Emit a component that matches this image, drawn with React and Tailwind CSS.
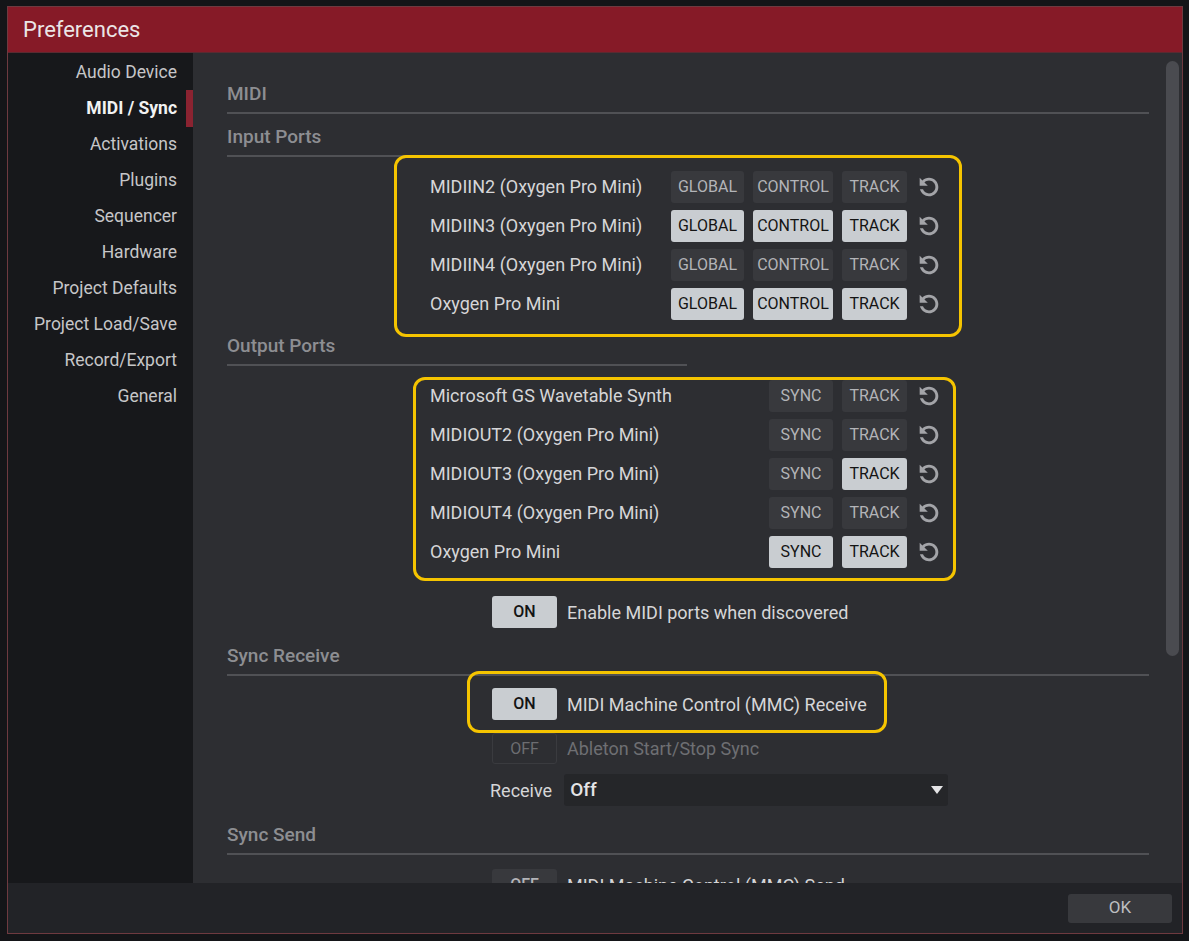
import React from "react";

const navItems = [
  "Audio Device",
  "MIDI / Sync",
  "Activations",
  "Plugins",
  "Sequencer",
  "Hardware",
  "Project Defaults",
  "Project Load/Save",
  "Record/Export",
  "General",
];

const inputPorts = [
  { name: "MIDIIN2 (Oxygen Pro Mini)", on: [false, false, false] },
  { name: "MIDIIN3 (Oxygen Pro Mini)", on: [true, true, true] },
  { name: "MIDIIN4 (Oxygen Pro Mini)", on: [false, false, false] },
  { name: "Oxygen Pro Mini", on: [true, true, true] },
];

const outputPorts = [
  { name: "Microsoft GS Wavetable Synth", on: [false, false] },
  { name: "MIDIOUT2 (Oxygen Pro Mini)", on: [false, false] },
  { name: "MIDIOUT3 (Oxygen Pro Mini)", on: [false, true] },
  { name: "MIDIOUT4 (Oxygen Pro Mini)", on: [false, false] },
  { name: "Oxygen Pro Mini", on: [true, true] },
];

// counter-clockwise reset arrow
function ResetIcon() {
  return (
    <svg width="28" height="28" viewBox="0 0 24 24" className="mr-[-4px]">
      <g transform="translate(24 0) scale(-1 1)">
        <path
          d="M17.65 6.35C16.2 4.9 14.21 4 12 4c-4.42 0-7.99 3.58-7.99 8s3.57 8 7.99 8c3.73 0 6.84-2.55 7.73-6h-2.6c-.82 2.1-2.8 3.5-5.13 3.5-3.04 0-5.5-2.46-5.5-5.5s2.46-5.5 5.5-5.5c1.52 0 2.9.62 3.9 1.62L13 11h7V4l-2.35 2.35z"
          fill="#a3a4a8"
        />
      </g>
    </svg>
  );
}

function PortButton({ label, active, width }) {
  return (
    <div
      className={
        "h-[32px] flex items-center justify-center rounded-[3px] text-[16px] " +
        width +
        (active ? " bg-[#c9cdd1] text-[#141414]" : " bg-[#38393d] text-[#b3b4b8]")
      }
    >
      {label}
    </div>
  );
}

function PortRow({ name, children }) {
  return (
    <div className="flex items-center h-[32px]">
      <div className="flex-1 text-[18px] leading-[22px] text-[#d6d6d8]">{name}</div>
      <div className="flex gap-[9px]">{children}</div>
      <div className="w-[32px] flex justify-end">
        <ResetIcon />
      </div>
    </div>
  );
}

function Heading({ children, className = "", lineWidth = "w-full" }) {
  return (
    <div className={className}>
      <div className={"pb-[8px] border-b-2 border-[#505155] " + lineWidth}>
        <div className="text-[19px] leading-[20px] font-medium text-[#8d8e92]">{children}</div>
      </div>
    </div>
  );
}

function Toggle({ on, disabled }) {
  if (disabled) {
    return (
      <div className="w-[65px] h-[31px] flex items-center justify-center rounded-[3px] border border-[#3a3b3f] text-[16px] text-[#6c6d71]">
        OFF
      </div>
    );
  }
  return (
    <div
      className={
        "w-[65px] h-[32px] flex items-center justify-center rounded-[3px] text-[16px] font-medium " +
        (on ? "bg-[#c9cdd1] text-[#141414]" : "bg-[#38393d] text-[#b3b4b8]")
      }
    >
      {on ? "ON" : "OFF"}
    </div>
  );
}

export default function App() {
  return (
    <div
      className="w-[1189px] h-[941px] bg-[#141518] pt-[6px] pl-[7px]"
      style={{ fontFamily: "Roboto, 'Liberation Sans', sans-serif" }}
    >
      <div className="w-[1176px] h-[928px] border border-[#6e3a40] flex flex-col overflow-hidden">
        <div className="h-[45px] bg-[#861a27] flex items-center pl-[15px] text-[22px] text-[#ebe5e6]">
          Preferences
        </div>
        <div className="flex flex-1 min-h-0 border-t border-[#5a2a31]">
          <div className="w-[185px] bg-[#17181b] pt-[1px]">
            {navItems.map((item) => {
              const active = item === "MIDI / Sync";
              return (
                <div key={item} className="relative h-[36px] flex items-center justify-end pr-[16px]">
                  <span
                    className={
                      "text-[17.5px] " +
                      (active ? "font-bold text-[#f2f2f2]" : "text-[#c6c6c8]")
                    }
                  >
                    {item}
                  </span>
                  {active && (
                    <div className="absolute right-0 top-0 w-[7px] h-[37px] bg-[#8b2331]" />
                  )}
                </div>
              );
            })}
          </div>

          <div className="flex-1 relative overflow-hidden bg-[#2d2e32]">
            <div className="absolute right-[3px] top-[8px] w-[13px] h-[595px] rounded-full bg-[#4a4b50]" />
            <div className="pl-[34px] pr-[33px] pt-[31px]">
              <Heading>MIDI</Heading>
              <Heading className="mt-[13px]" lineWidth="w-[460px]">
                Input Ports
              </Heading>

              <div className="ml-[167px] mt-[-2px] w-[568px] border-[3px] border-[#f5c400] rounded-[12px] pl-[33px] pr-[20px] pt-[13px] pb-[14px] flex flex-col gap-[7px]">
                {inputPorts.map((p) => (
                  <PortRow key={p.name} name={p.name}>
                    <PortButton label="GLOBAL" active={p.on[0]} width="w-[73px]" />
                    <PortButton label="CONTROL" active={p.on[1]} width="w-[80px]" />
                    <PortButton label="TRACK" active={p.on[2]} width="w-[65px]" />
                  </PortRow>
                ))}
              </div>

              <Heading className="mt-[-1px]" lineWidth="w-[460px]">
                Output Ports
              </Heading>

              <div className="ml-[186px] mt-[11px] w-[543px] border-[3px] border-[#f5c400] rounded-[12px] pl-[14px] pr-[14px] pt-0 pb-[10px] flex flex-col gap-[7px]">
                {outputPorts.map((p) => (
                  <PortRow key={p.name} name={p.name}>
                    <PortButton label="SYNC" active={p.on[0]} width="w-[64px]" />
                    <PortButton label="TRACK" active={p.on[1]} width="w-[65px]" />
                  </PortRow>
                ))}
              </div>

              <div className="ml-[265px] mt-[15px] flex items-center gap-[10px]">
                <Toggle on />
                <span className="text-[18px] text-[#d6d6d8]">Enable MIDI ports when discovered</span>
              </div>

              <Heading className="mt-[18px]">Sync Receive</Heading>

              <div className="ml-[240px] mt-[-5px] w-[420px] border-[3px] border-[#f5c400] rounded-[12px] pl-[22px] pt-[14px] pb-[10px] flex items-center gap-[10px]">
                <Toggle on />
                <span className="text-[18px] text-[#d6d6d8]">MIDI Machine Control (MMC) Receive</span>
              </div>

              <div className="ml-[265px] flex items-center gap-[10px]">
                <Toggle disabled />
                <span className="text-[18px] text-[#6e6f73]">Ableton Start/Stop Sync</span>
              </div>

              <div className="ml-[263px] mt-[10px] flex items-center gap-[12px]">
                <span className="text-[18px] text-[#d6d6d8]">Receive</span>
                <div className="w-[384px] h-[32px] bg-[#252629] rounded-[3px] flex items-center justify-between pl-[6px] pr-[5px]">
                  <span className="text-[19px] font-medium text-[#e4e4e6]">Off</span>
                  <svg width="12" height="8" viewBox="0 0 12 8">
                    <path d="M0 0 L12 0 L6 8 Z" fill="#e4e4e6" />
                  </svg>
                </div>
              </div>

              <Heading className="mt-[19px]">Sync Send</Heading>

              <div className="ml-[265px] mt-[14px] flex items-center gap-[10px]">
                <Toggle />
                <span className="text-[18px] text-[#d6d6d8]">MIDI Machine Control (MMC) Send</span>
              </div>
            </div>
          </div>
        </div>
        <div className="h-[50px] bg-[#222327] flex items-center justify-end pr-[10px]">
          <div className="w-[104px] h-[29px] rounded-[3px] bg-[#38393d] flex items-center justify-center text-[17px] text-[#bdbec0]">
            OK
          </div>
        </div>
      </div>
    </div>
  );
}
